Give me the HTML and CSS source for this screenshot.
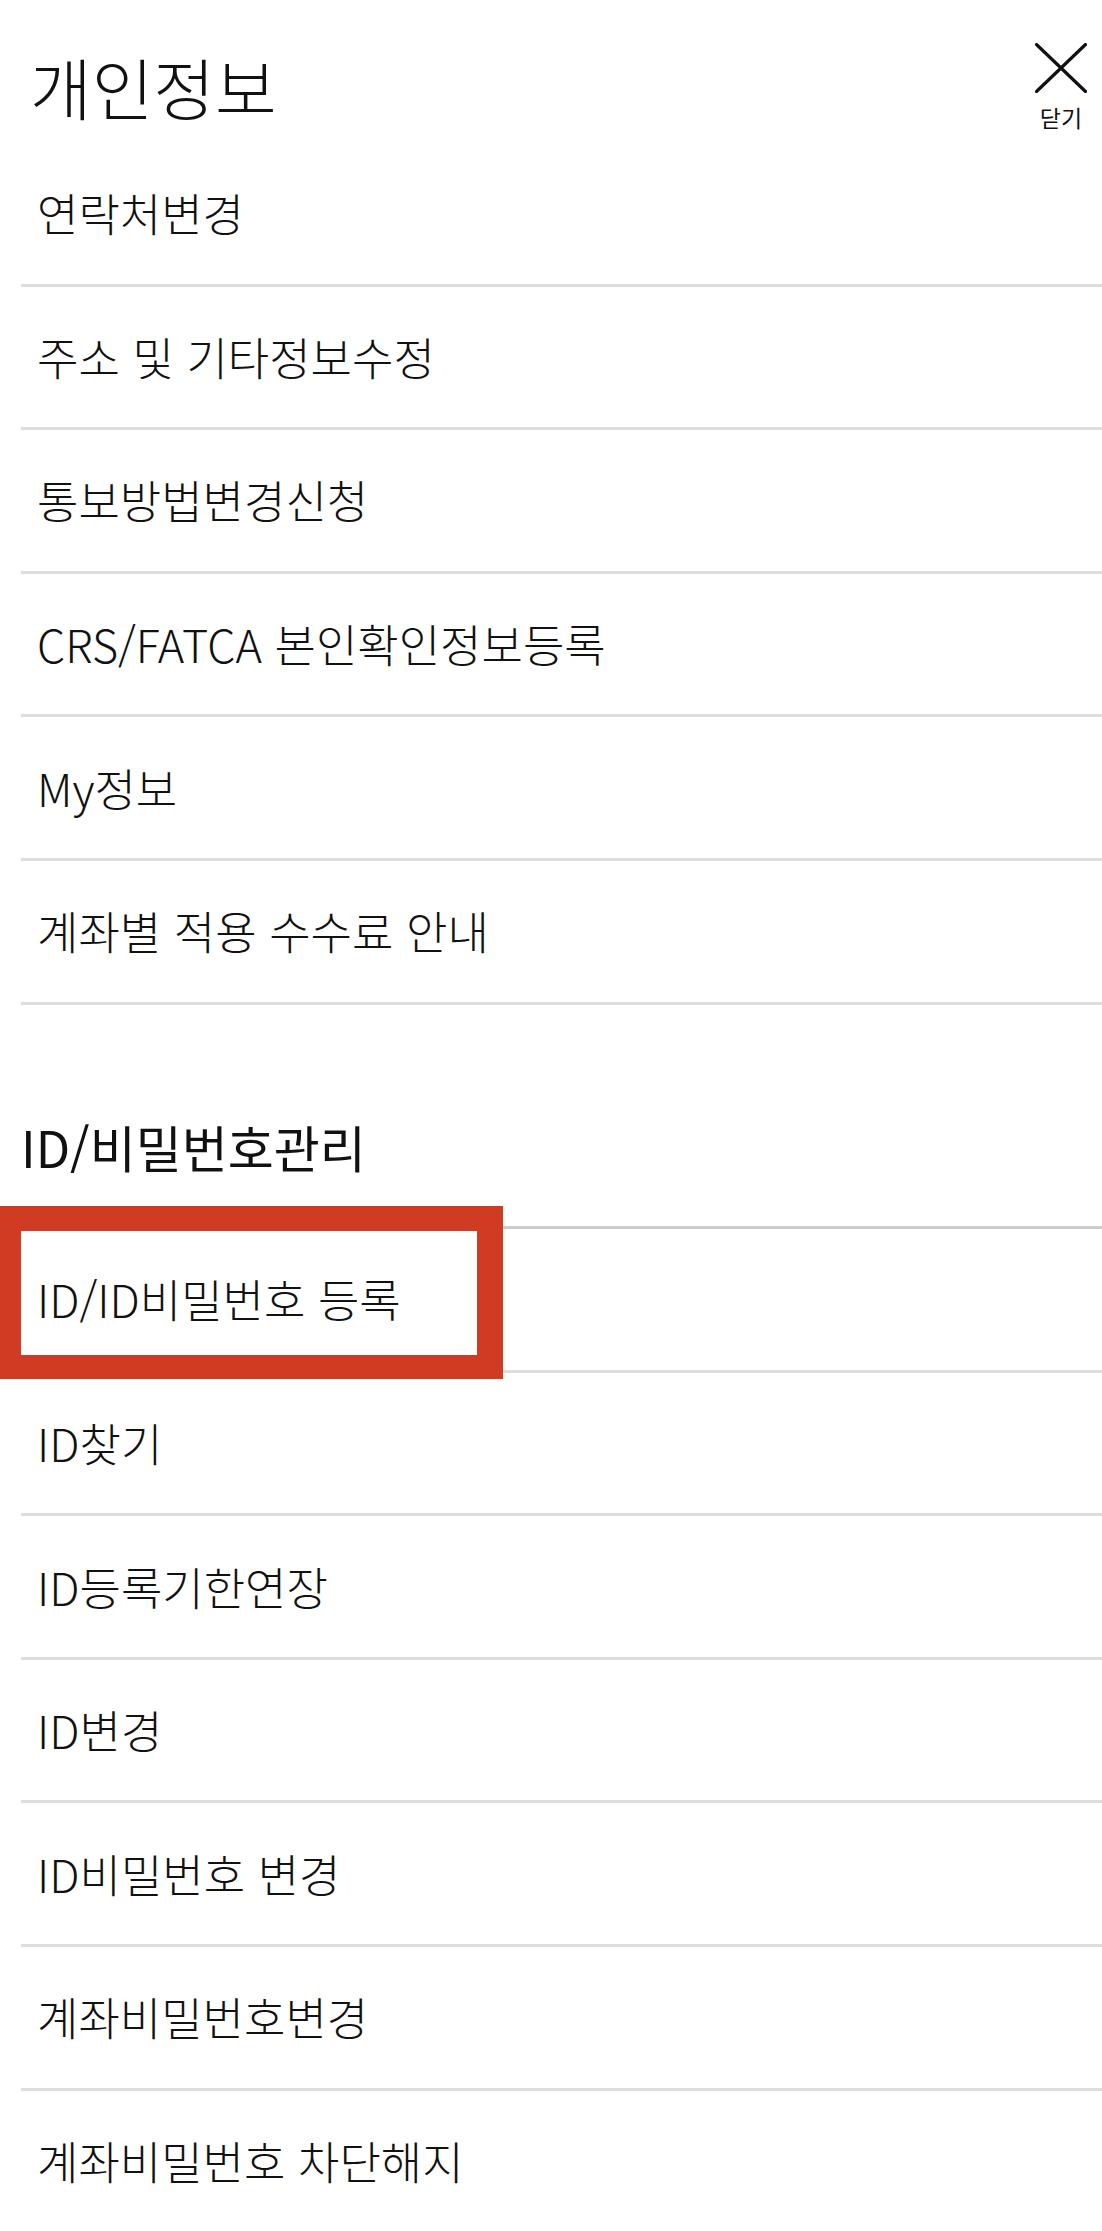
FILE: index.html
```html
<!DOCTYPE html>
<html lang="ko">
<head>
<meta charset="utf-8">
<title>개인정보</title>
<link rel="stylesheet" href="styles.css">
</head>
<body>
<div class="page">
  <header class="header">
    <h1 class="title">개인정보</h1>
    <button class="close" type="button">
      <svg class="close-icon" width="52" height="50" viewBox="0 0 52 50" aria-hidden="true">
        <path d="M1.5 1.5 L50.5 48.5 M50.5 1.5 L1.5 48.5" stroke="#111" stroke-width="3.2" stroke-linecap="round" fill="none"/>
      </svg>
      <span class="close-label">닫기</span>
    </button>
  </header>

  <ul class="menu">
    <li class="item">연락처변경</li>
    <li class="item">주소 및 기타정보수정</li>
    <li class="item">통보방법변경신청</li>
    <li class="item">CRS/FATCA 본인확인정보등록</li>
    <li class="item">My정보</li>
    <li class="item">계좌별 적용 수수료 안내</li>
  </ul>

  <h2 class="section-title">ID/비밀번호관리</h2>

  <ul class="menu">
    <li class="item item-marked">ID/ID비밀번호 등록<span class="highlight"></span></li>
    <li class="item">ID찾기</li>
    <li class="item">ID등록기한연장</li>
    <li class="item">ID변경</li>
    <li class="item">ID비밀번호 변경</li>
    <li class="item">계좌비밀번호변경</li>
    <li class="item">계좌비밀번호 차단해지</li>
  </ul>
</div>
</body>
</html>
```

FILE: styles.css
```css
html, body {
  margin: 0;
  padding: 0;
  background: #ffffff;
}

body {
  font-family: "Noto Sans CJK KR", "Noto Sans", sans-serif;
  color: #111111;
  overflow: hidden;
}

.page {
  width: 1102px;
  height: 2231px;
  overflow: hidden;
}

.header {
  display: flex;
  justify-content: space-between;
  align-items: flex-start;
  height: 143px;
  box-sizing: border-box;
  padding: 0 15px 0 30px;
}

.title {
  margin: 0;
  padding-top: 53px;
  font-size: 67px;
  line-height: 66px;
  font-weight: 300;
}

.close {
  display: flex;
  flex-direction: column;
  align-items: center;
  margin: 43px 0 0;
  padding: 0;
  border: 0;
  background: none;
  font-family: inherit;
  color: #111111;
}

.close-icon {
  display: block;
}

.close-label {
  margin-top: 11px;
  font-size: 23px;
  line-height: 26px;
  font-weight: 400;
}

.menu {
  list-style: none;
  margin: 0 0 0 21px;
  padding: 0;
}

.item {
  display: flex;
  align-items: center;
  height: 143.6px;
  box-sizing: border-box;
  padding-left: 16px;
  border-bottom: 3px solid #dddddd;
  font-size: 45px;
  line-height: 52px;
  font-weight: 300;
}

.item-marked {
  position: relative;
}

.highlight {
  position: absolute;
  left: -21px;
  top: -23px;
  width: 503px;
  height: 173px;
  box-sizing: border-box;
  border-style: solid;
  border-color: #d03b23;
  border-width: 25px 26px 24px 21px;
}

.section-title {
  margin: 0 0 0 21px;
  height: 224.5px;
  box-sizing: border-box;
  display: flex;
  align-items: flex-end;
  padding-bottom: 50.5px;
  border-bottom: 3px solid #cbcbcb;
  font-size: 50px;
  line-height: 60px;
  font-weight: 400;
}
```
